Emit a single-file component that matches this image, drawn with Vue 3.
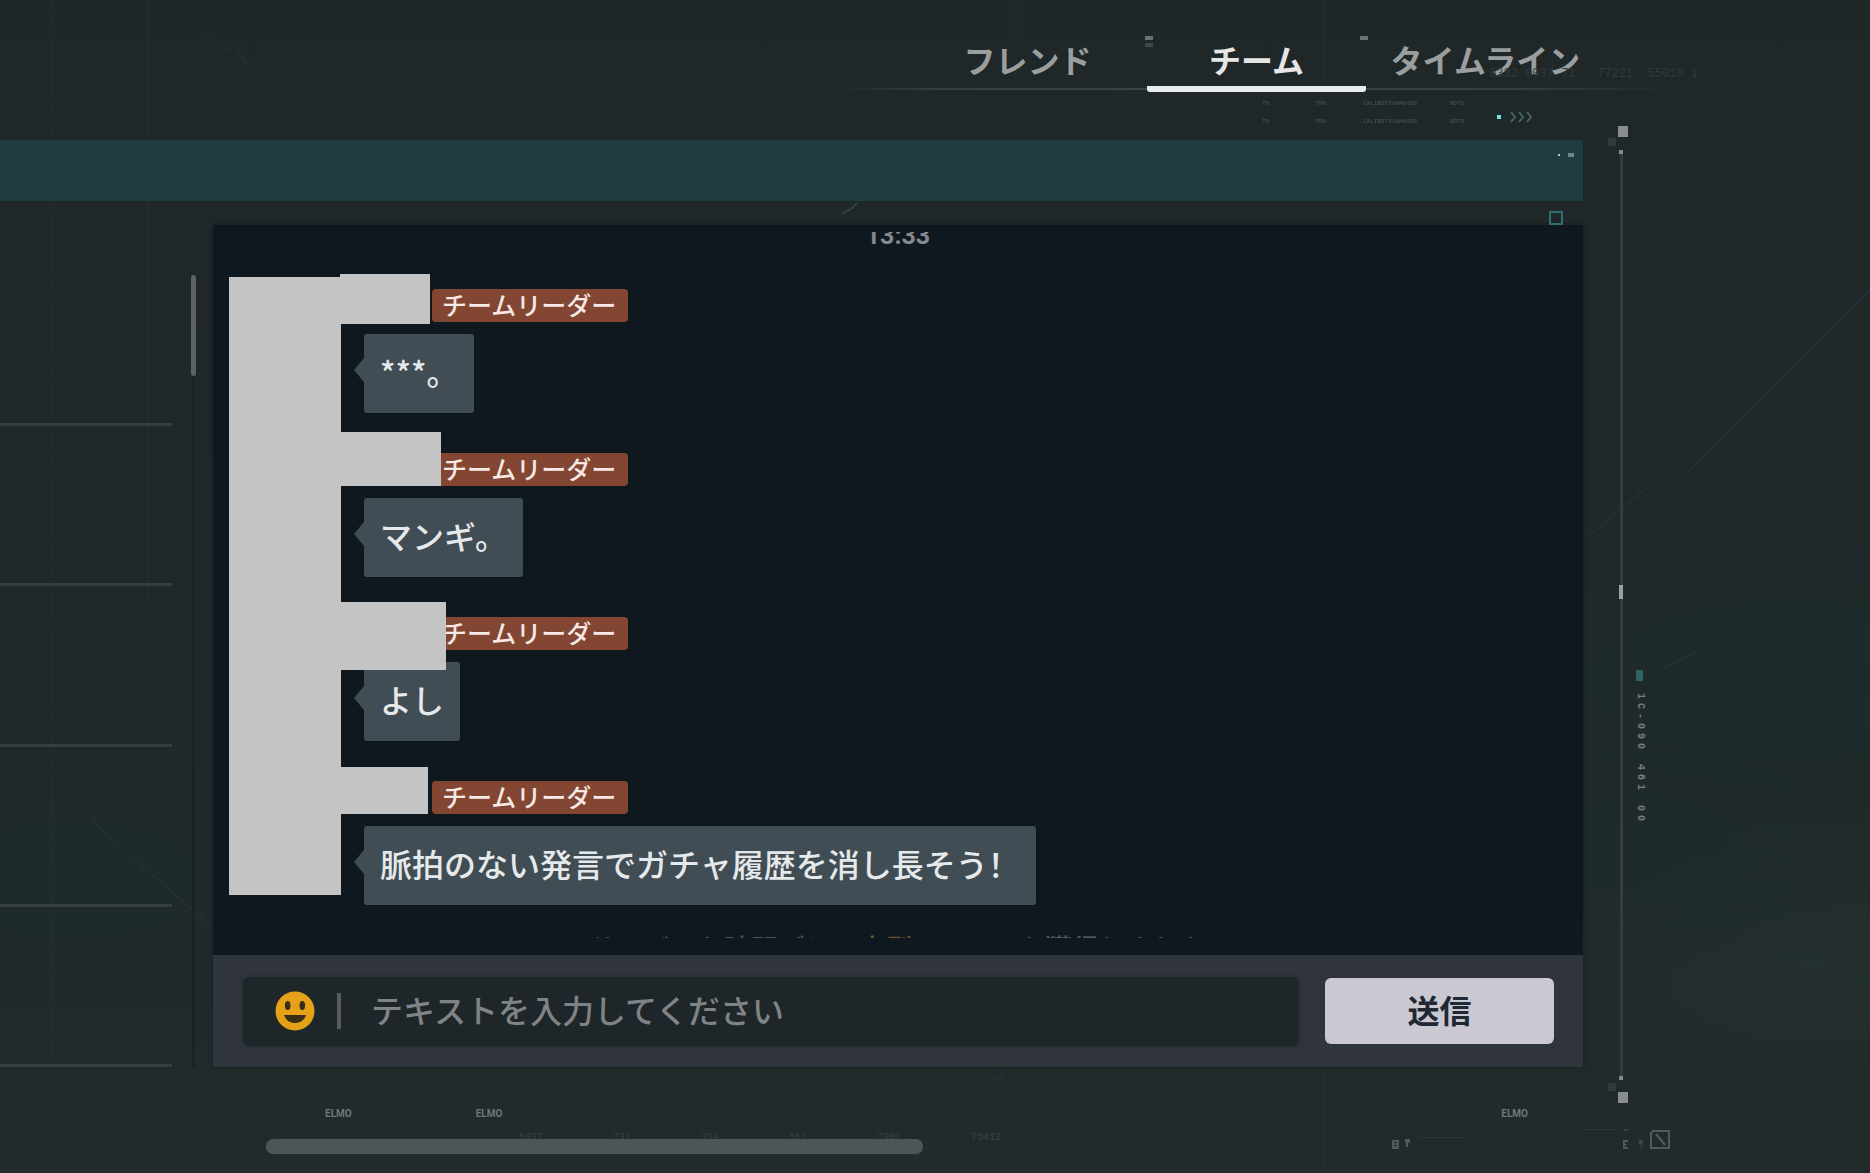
<script setup>
import { ref } from 'vue'

const tabs = ['フレンド', 'チーム', 'タイムライン']
const activeTab = ref('チーム')
const draft = ref('')

const messages = [
  { text: '***。', mask: { left: -1, top: -15, width: 90, height: 50 } },
  { text: 'マンギ。', mask: { left: 0, top: -21, width: 100, height: 54 } },
  { text: 'よし', mask: { left: 0, top: -15, width: 105, height: 68 } },
  { text: '脈拍のない発言でガチャ履歴を消し長そう', mark: '！', mask: { left: 0, top: -14, width: 87, height: 47 } },
]

const px = (box) => Object.fromEntries(Object.entries(box).map(([k, v]) => [k, v + 'px']))

const microColumns = ['TN', 'TRN', 'CALIBSTXXWMWXBS', 'BOTS']
const serial = ['1C-090', '461', '00']
const ticks = ['5037', '731', '314', '551', '7901', '75412']
</script>

<template>
  <div class="page">
    <svg class="backdrop" viewBox="0 0 1870 1173" preserveAspectRatio="xMidYMid slice" aria-hidden="true">
      <g fill="none" stroke="#2a3436" stroke-width="2">
        <path d="M51 0V1060M148 0V600M1016 0V120M1016 1067V1173M1323 0V90M1325 1067V1173" opacity=".3" />
        <path d="M1690 470L1870 290M1590 535L1650 485M92 820L118 845M130 855L210 925M900 1173L1010 1067" opacity=".55" />
        <path d="M1660 670L1700 650M205 36L250 62M236 44l10 22" opacity=".5" />
        <path d="M842 214L850 209M849 211L857 203" stroke="#33504c" opacity=".7" />
      </g>
    </svg>

    <header class="top">
      <nav class="tabs">
        <button
          v-for="tab in tabs"
          :key="tab"
          type="button"
          class="tab"
          :class="{ 'tab--active': tab === activeTab }"
          @click="activeTab = tab"
        >{{ tab }}</button>
      </nav>
      <div class="code" aria-hidden="true">0332 0037 71 &nbsp; 77221 &nbsp;55010 1</div>
      <div class="micro" aria-hidden="true">
        <div class="micro__rows">
          <div v-for="n in 2" :key="n" class="micro__row">
            <span v-for="c in microColumns" :key="c">{{ c }}</span>
          </div>
        </div>
        <svg class="micro__arrows" width="36" height="12" viewBox="0 0 36 12">
          <rect x="1" y="4" width="4" height="4" fill="#6be3e0" />
          <path d="M15 1l4 5-4 5M23 1l4 5-4 5M31 1l4 5-4 5" fill="none" stroke="#466367" stroke-width="2" />
        </svg>
      </div>
    </header>

    <div class="body">
      <div class="workspace">
        <div class="banner">
          <svg width="18" height="6" viewBox="0 0 18 6" aria-hidden="true">
            <rect x="1" y="2" width="2" height="2" fill="#a9cdd0" />
            <rect x="11" y="1" width="6" height="4" fill="#6f868a" />
          </svg>
        </div>

        <div class="columns">
          <aside class="sidebar">
            <ul class="rows">
              <li v-for="n in 5" :key="n" class="rows__item"></li>
            </ul>
            <div class="track"><div class="track__thumb"></div></div>
          </aside>

          <main class="chat">
            <i class="chat__pin"></i>
            <section class="feed">
              <time class="feed__time">13:33</time>
              <div class="feed__body">
                <div class="avatars"></div>
                <ol class="messages">
                  <li v-for="m in messages" :key="m.text" class="message">
                    <div class="message__head">
                      <span class="badge">チームリーダー</span>
                    </div>
                    <p class="bubble">{{ m.text }}<span v-if="m.mark" class="bubble__mark">{{ m.mark }}</span></p>
                    <div class="message__mask" :style="px(m.mask)"></div>
                  </li>
                </ol>
              </div>
              <p class="feed__notice"><em>サーバー</em>も時間ごとに<em>大型アイテム</em>を獲得しました</p>
            </section>

            <form class="composer" @submit.prevent="draft = ''">
              <div class="field">
                <button type="button" class="emoji" aria-label="絵文字">
                  <svg width="40" height="40" viewBox="0 0 40 40" aria-hidden="true">
                    <circle cx="20" cy="20" r="19.5" fill="#e5a117" />
                    <ellipse cx="12.700" cy="14.500" rx="2.800" ry="4.500" fill="#3a2f16" />
                    <ellipse cx="27.300" cy="14.500" rx="2.800" ry="4.500" fill="#3a2f16" />
                    <path d="M9 24H31C29.500 29 25 32 20 32S10.500 29 9 24Z" fill="#3a2f16" />
                  </svg>
                </button>
                <i class="field__divider"></i>
                <input v-model="draft" class="field__input" type="text" aria-label="テキスト" placeholder="テキストを入力してください" />
              </div>
              <button type="submit" class="send">送信</button>
            </form>
          </main>
        </div>
      </div>

      <div class="rail" aria-hidden="true">
        <div class="rail__line">
          <svg width="20" height="28" viewBox="0 0 20 28">
            <rect x="10" y="0" width="10" height="11" fill="#8a8d8f" />
            <rect x="0" y="12" width="8" height="8" fill="#33393b" />
            <rect x="11" y="24" width="4" height="4" fill="#84898b" />
          </svg>
          <div class="rail__stroke rail__stroke--upper"></div>
          <div class="rail__knob"></div>
          <div class="rail__stroke rail__stroke--lower"></div>
          <svg width="20" height="28" viewBox="0 0 20 28">
            <rect x="11" y="0" width="4" height="4" fill="#84898b" />
            <rect x="0" y="7" width="8" height="8" fill="#33393b" />
            <rect x="10" y="16" width="10" height="11" fill="#8a8d8f" />
          </svg>
        </div>
        <div class="serial">
          <i class="serial__chip"></i>
          <div v-for="group in serial" :key="group" class="serial__group">
            <span v-for="(ch, i) in group" :key="i">{{ ch }}</span>
          </div>
        </div>
      </div>
    </div>

    <footer class="foot">
      <div class="foot__names">
        <span>ELMO</span><span>ELMO</span><span class="foot__last">ELMO</span>
      </div>
      <div class="foot__ticks">
        <span v-for="t in ticks" :key="t">{{ t }}</span>
        <svg class="foot__icons" width="282" height="22" viewBox="0 0 282 22" aria-hidden="true">
          <g fill="#4b5a5a">
            <path d="M2 11h7v9h-7zM4 13v1h3v-1zM4 16v1h3v-1z" fill-rule="evenodd" />
            <path d="M15 10h5v4h-2v4h-2v-4h-1zM233 11h5v2h-3v2h2v1h-2v2h3v2h-5z" />
            <path d="M28 8h50v1H28zM195 0h32v1h-32z" opacity=".25" />
            <path d="M234 0h4v2h-4z" opacity=".5" />
            <path d="M249 11h4v3h-1v5h-3v-1h2v-3h-2z" opacity=".6" />
          </g>
          <path d="M263 2h16v17h-18V4zM266 5l9 11" fill="none" stroke="#4d5c5d" stroke-width="2" />
        </svg>
      </div>
      <div class="foot__pill"></div>
    </footer>
  </div>
</template>

<style>
body {
  background: #20292b;
}
</style>

<style scoped>
* {
  box-sizing: border-box;
}

.page {
  position: relative;
  display: flex;
  flex-direction: column;
  height: 100vh;
  overflow: hidden;
  background:
    radial-gradient(ellipse at 4% 75%, #1e2a2b 0, transparent 14%),
    radial-gradient(ellipse at 96% 58%, #1d2a2b 0, transparent 16%),
    radial-gradient(ellipse at 88% 72%, #1e2a2b 0, transparent 12%),
    radial-gradient(ellipse at 97% 82%, #242f30 0, transparent 12%),
    linear-gradient(180deg, #1f2729 0, #20292a 60%, #222b2c 100%);
  color: #e3e5e7;
  font-family: "Noto Sans CJK JP", sans-serif;
}

button,
input {
  padding: 0;
  border: 0;
  background: none;
  color: inherit;
  font: inherit;
}

ul,
ol,
p {
  margin: 0;
  padding: 0;
  list-style: none;
}

.backdrop {
  position: absolute;
  inset: 0;
  width: 100%;
  height: 100%;
}

.top {
  position: relative;
  flex: none;
  height: 126px;
}

.tabs {
  position: relative;
  display: grid;
  grid-template-columns: 239px 219px 239px;
  justify-content: center;
  width: 837px;
  height: 92px;
  margin: 0 195px 0 auto;
}

.tabs::before {
  content: "";
  position: absolute;
  inset: auto 0 2px;
  height: 2px;
  background: linear-gradient(90deg, transparent, #364042 12%, #3b4446 50%, #364042 80%, transparent);
}

.tab {
  position: relative;
  padding-top: 32px;
  border-bottom: 6px solid transparent;
  color: #9b9e9f;
  font-size: 32px;
  font-weight: 700;
  line-height: 54px;
  cursor: pointer;
}

.tab--active {
  border-bottom-color: #e9ecec;
  border-radius: 3px;
  color: #e6e6e6;
}

.tab--active::before,
.tab--active::after {
  content: "";
  position: absolute;
  top: 36px;
  width: 8px;
  height: 4px;
  background: #6d7273;
}

.tab--active::before {
  left: -2px;
  box-shadow: 0 7px #3e4647;
}

.tab--active::after {
  right: -2px;
}

.code {
  position: absolute;
  top: 66px;
  right: 172px;
  color: #303a3b;
  font: 12px/16px "Liberation Mono", monospace;
}

.micro {
  display: flex;
  justify-content: flex-end;
  align-items: flex-end;
  margin-right: 338px;
  padding-top: 8px;
}

.micro__rows {
  display: grid;
  gap: 10px;
}

.micro__row {
  display: grid;
  grid-template-columns: 53px 48px 87px 46px;
  color: #4b5456;
  font: 6px/8px "Liberation Mono", monospace;
}

.micro__arrows {
  margin-bottom: 3px;
}

.body {
  position: relative;
  display: flex;
  flex: 1;
  min-height: 0;
}

.workspace {
  display: flex;
  flex: 1;
  flex-direction: column;
  padding: 14px 0 37px;
}

.banner {
  display: flex;
  justify-content: flex-end;
  height: 61px;
  margin-bottom: 24px;
  padding: 12px 8px;
  background: #1f3c42;
}

.columns {
  display: flex;
  flex: 1;
  min-height: 0;
}

.sidebar {
  display: flex;
  flex: none;
  justify-content: space-between;
  width: 213px;
  padding: 41px 17px 0 0;
}

.rows {
  display: flex;
  flex-direction: column;
  width: 172px;
}

.rows__item {
  flex: 1;
  border-bottom: 3px solid #363d40;
}

.track {
  width: 5px;
  margin-top: 9px;
  background: linear-gradient(90deg, transparent 20%, #1b2325 20% 80%, transparent 80%);
}

.track__thumb {
  height: 101px;
  border-radius: 3px;
  background: #5f6164;
}

.chat {
  position: relative;
  display: flex;
  flex: 1;
  flex-direction: column;
  padding-top: 7px;
  background: #10181f;
  box-shadow: 0 0 4px #161e20;
}

.chat__pin {
  position: absolute;
  top: -14px;
  right: 20px;
  width: 14px;
  height: 14px;
  border: 2px solid #2e6d70;
}

.feed {
  display: flex;
  flex: 1;
  flex-direction: column;
  min-height: 0;
  overflow: hidden;
}

.feed__time {
  flex: none;
  margin: -12px 0 25px;
  color: #85898d;
  font-family: Roboto, sans-serif;
  font-size: 25px;
  font-weight: 700;
  line-height: 32px;
  text-align: center;
}

.feed__body {
  display: flex;
  flex: none;
  padding-left: 16px;
}

.avatars {
  width: 112px;
  margin-bottom: 10px;
  background: #c4c4c4;
}

.messages {
  display: grid;
  gap: 40px;
  padding-top: 12px;
}

.message {
  position: relative;
}

.message__head {
  display: flex;
  margin: 0 0 12px 91px;
}

.badge {
  padding: 0 12px 2px 10px;
  border-radius: 4px;
  background: #824632;
  color: #f6e8e4;
  font-size: 25px;
  font-weight: 500;
  line-height: 31px;
}

.bubble {
  position: relative;
  width: max-content;
  margin-left: 23px;
  padding: 14px 16px 18px;
  border-radius: 3px;
  background: #414d54;
  color: #e6e9eb;
  font-size: 32px;
  font-weight: 500;
  line-height: 47px;
}

.bubble::before {
  content: "";
  position: absolute;
  top: 24px;
  right: 100%;
  border: solid transparent;
  border-width: 12px 10px 12px 0;
  border-right-color: #414d54;
}

.bubble__mark {
  font-family: "Noto Sans CJK SC", sans-serif;
}

.message__mask {
  position: absolute;
  background: #c4c4c4;
}

.feed__notice {
  flex: none;
  margin-top: 23px;
  color: #4d5358;
  font-size: 27px;
  font-weight: 500;
  line-height: 40px;
  text-align: center;
  white-space: nowrap;
}

.feed__notice em {
  color: #6d5730;
  font-style: normal;
}

.composer {
  display: flex;
  flex: none;
  align-items: center;
  gap: 26px;
  height: 112px;
  margin-top: 17px;
  padding: 0 29px 0 30px;
  background: #2f343d;
}

.field {
  display: flex;
  flex: 1;
  align-items: center;
  height: 69px;
  padding-left: 32px;
  border-radius: 6px;
  background: #1e262a;
  box-shadow: 0 0 4px #252c31;
}

.emoji {
  width: 40px;
  height: 40px;
  cursor: pointer;
}

.field__divider {
  width: 4px;
  height: 36px;
  margin: 0 30px 0 22px;
  background: #575b5d;
}

.field__input {
  flex: 1;
  height: 52px;
  padding-bottom: 4px;
  outline: 0;
  font-size: 32px;
  font-weight: 500;
}

.field__input::placeholder {
  color: #808385;
  opacity: 1;
}

.send {
  width: 229px;
  height: 66px;
  padding-bottom: 4px;
  border-radius: 6px;
  background: #cac8d0;
  color: #1f2833;
  font-size: 32px;
  font-weight: 700;
  line-height: 62px;
  cursor: pointer;
}

.rail {
  display: flex;
  flex: none;
  gap: 8px;
  width: 287px;
  padding-left: 25px;
}

.rail__line {
  display: flex;
  flex-direction: column;
  width: 20px;
}

.rail__line svg {
  flex: none;
}

.rail__stroke {
  width: 3px;
  margin-left: 12px;
  background: #343c3f;
}

.rail__stroke--upper {
  flex: 431;
}

.rail__stroke--lower {
  flex: 477;
}

.rail__knob {
  width: 4px;
  height: 14px;
  margin-left: 11px;
  background: #9da0a3;
}

.serial {
  display: flex;
  flex-direction: column;
  gap: 12px;
  padding-top: 544px;
  color: #7b8183;
  font: 700 10px/8px "Liberation Mono", monospace;
}

.serial__chip {
  width: 7px;
  height: 11px;
  background: #2f6366;
}

.serial__group {
  display: flex;
  flex-direction: column;
  gap: 4px;
}

.serial__group span {
  width: 8px;
  height: 6px;
  writing-mode: vertical-rl;
}

.serial__group + .serial__group {
  margin-top: 3px;
}

.foot {
  position: relative;
  flex: none;
  height: 69px;
}

.foot__names {
  display: flex;
  gap: 124px;
  padding: 4px 342px 0 325px;
  color: #6c7879;
  font: 700 10px/12px Roboto, sans-serif;
}

.foot__last {
  margin-left: auto;
}

.foot__ticks {
  display: flex;
  gap: 70px;
  padding: 9px 198px 0 519px;
  color: #37423f;
  font: 10px/18px "Liberation Mono", monospace;
}

.foot__icons {
  margin-left: auto;
}

.foot__pill {
  position: absolute;
  top: 35px;
  left: 266px;
  width: 657px;
  height: 15px;
  border-radius: 7px;
  background: #4d5557;
}
</style>
